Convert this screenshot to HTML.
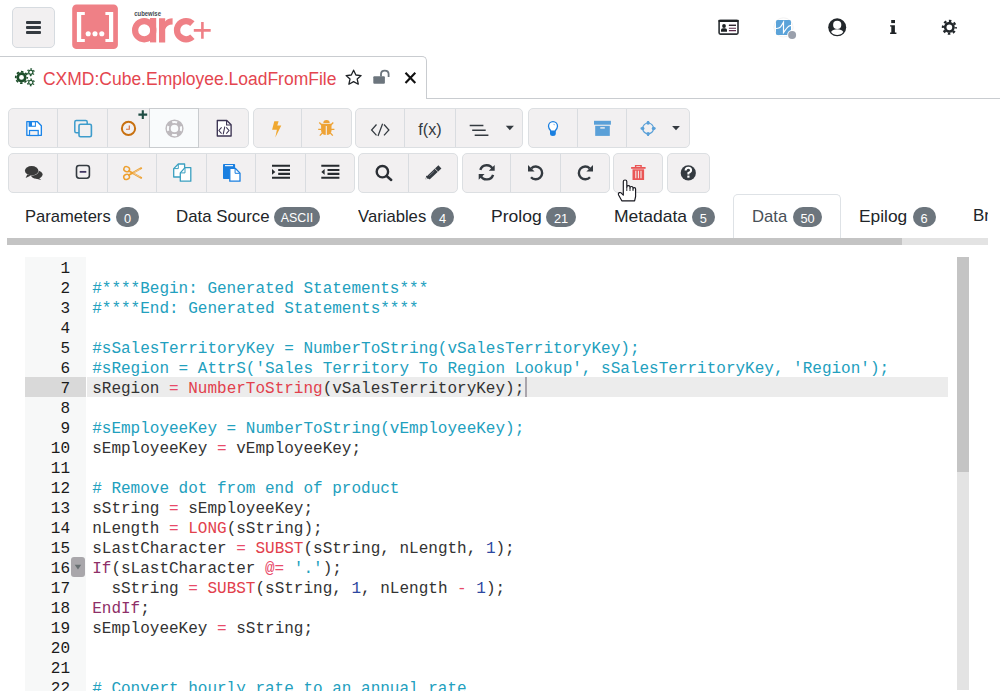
<!DOCTYPE html>
<html><head><meta charset="utf-8">
<style>
*{box-sizing:border-box;margin:0;padding:0}
html,body{width:1000px;height:691px;overflow:hidden;background:#fff;font-family:"Liberation Sans",sans-serif;position:relative}
.abs{position:absolute}
#ham{left:12px;top:7px;width:43px;height:41px;background:#f2f0f1;border:1px solid #d6dbe0;border-radius:5px}
#ham i{position:absolute;left:13px;width:15.2px;height:2.5px;background:#343a40;border-radius:1px}
#tab{left:-5px;top:56px;width:432px;height:43px;border:1px solid #c9ccd0;border-bottom:none;border-radius:0 5px 0 0;background:#fff}
#tabline{left:426px;top:98px;width:574px;height:1px;background:#c9ccd0}
#title{left:42.7px;top:68px;font-size:19.2px;transform:scaleX(0.911);transform-origin:0 0;color:#e4464f;white-space:nowrap;line-height:22px}
.grp{position:absolute;height:40px;background:#f2f0f1;border:1px solid #dcdfe2;border-radius:5px;overflow:hidden}
.sep{position:absolute;width:1px;background:#d9dce0}
.tl{position:absolute;top:206px;font-size:17px;transform-origin:0 0;color:#212529;white-space:nowrap;line-height:22px}
.bd{position:absolute;top:207px;height:20px;background:#6c757d;color:#fff;border-radius:10px;font-size:12.8px;text-align:center;line-height:23px;font-weight:normal}
#code{left:92.2px;top:259px;font-family:"Liberation Mono",monospace;font-size:16px;line-height:20px;color:#333;white-space:pre}
.ln{position:absolute;left:20px;width:50px;text-align:right;font-family:"Liberation Mono",monospace;font-size:16px;line-height:20px;color:#1a1a1a}
.c{color:#22a0be}
.o{color:#e84a6a}
.f{color:#e2404c}
.k{color:#8e2f68}
.n{color:#2c47a0}
.s{color:#22a0be}
svg{position:absolute;left:0;top:0}
</style></head><body>
<!-- header -->
<div id="ham" class="abs"><i style="top:13.15px"></i><i style="top:18.25px"></i><i style="top:23.45px"></i></div>

<div id="tab" class="abs"></div>
<div id="tabline" class="abs"></div>
<div id="title" class="abs">CXMD:Cube.Employee.LoadFromFile</div>

<!-- toolbar row1 -->
<div class="grp" style="left:8px;top:108px;width:240.5px"></div>
<div class="grp" style="left:252.5px;top:108px;width:99px"></div>
<div class="grp" style="left:354.5px;top:108px;width:168px"></div>
<div class="grp" style="left:528px;top:108px;width:161.5px"></div>
<div class="abs" style="left:149px;top:108px;width:50px;height:40px;background:#f9fbfc;border:1px solid #c9cccf"></div>
<div class="sep" style="left:57px;top:109px;height:38px"></div>
<div class="sep" style="left:107px;top:109px;height:38px"></div>
<div class="sep" style="left:301px;top:109px;height:38px"></div>
<div class="sep" style="left:404px;top:109px;height:38px"></div>
<div class="sep" style="left:455px;top:109px;height:38px"></div>
<div class="sep" style="left:577px;top:109px;height:38px"></div>
<div class="sep" style="left:626px;top:109px;height:38px"></div>
<!-- toolbar row2 -->
<div class="grp" style="left:8px;top:152.5px;width:347px"></div>
<div class="grp" style="left:358px;top:152.5px;width:99.5px"></div>
<div class="grp" style="left:461.5px;top:152.5px;width:148.5px"></div>
<div class="grp" style="left:613.2px;top:152.5px;width:50.3px"></div>
<div class="grp" style="left:666.5px;top:152.5px;width:43px"></div>
<div class="sep" style="left:57px;top:153.5px;height:38px"></div>
<div class="sep" style="left:107px;top:153.5px;height:38px"></div>
<div class="sep" style="left:156px;top:153.5px;height:38px"></div>
<div class="sep" style="left:206px;top:153.5px;height:38px"></div>
<div class="sep" style="left:255px;top:153.5px;height:38px"></div>
<div class="sep" style="left:305px;top:153.5px;height:38px"></div>
<div class="sep" style="left:408px;top:153.5px;height:38px"></div>
<div class="sep" style="left:510px;top:153.5px;height:38px"></div>
<div class="sep" style="left:560px;top:153.5px;height:38px"></div>

<!-- tabs -->
<div class="abs" style="left:733px;top:193.5px;width:108px;height:46px;border:1px solid #dee2e6;border-bottom:none;border-radius:5px 5px 0 0;background:#fff"></div>
<div class="tl" style="left:24.6px;transform:scaleX(0.975)">Parameters</div>
<div class="bd" style="left:116px;width:23px">0</div>
<div class="tl" style="left:175.5px;transform:scaleX(0.99)">Data Source</div>
<div class="bd" style="left:274px;width:46px;font-size:12.4px">ASCII</div>
<div class="tl" style="left:358px;transform:scaleX(0.98)">Variables</div>
<div class="bd" style="left:431px;width:23px">4</div>
<div class="tl" style="left:490.5px;transform:scaleX(1.03)">Prolog</div>
<div class="bd" style="left:546px;width:30px">21</div>
<div class="tl" style="left:613.5px;transform:scaleX(1.03)">Metadata</div>
<div class="bd" style="left:691.5px;width:23.5px">5</div>
<div class="tl" style="left:752px;color:#495057;transform:scaleX(0.98)">Data</div>
<div class="bd" style="left:793px;width:29px">50</div>
<div class="tl" style="left:859px;transform:scaleX(1.02)">Epilog</div>
<div class="bd" style="left:912.5px;width:23px">6</div>
<div class="abs" style="left:960px;top:195px;width:28px;height:40px;overflow:hidden"><div class="tl" style="left:13px;top:10px">Br</div></div>
<div class="abs" style="left:7px;top:238px;width:981px;height:6.5px;background:#e3e3e3"></div>
<div class="abs" style="left:7px;top:238px;width:895px;height:6.5px;background:#c4c4c4"></div>

<!-- editor -->
<div class="abs" style="left:25px;top:257px;width:61px;height:434px;background:#f7f8f8"></div>
<div class="abs" style="left:25px;top:377px;width:61px;height:20px;background:#d9d9d9"></div>
<div class="abs" style="left:87px;top:377px;width:861px;height:20px;background:#ececec"></div>
<div class="abs" style="left:957px;top:257px;width:12px;height:433px;background:#e3e3e3"></div>
<div class="abs" style="left:957px;top:257px;width:12px;height:215px;background:#c4c4c4"></div>
<div class="abs" style="left:71px;top:557px;width:13.5px;height:19.5px;background:#a9a7ab;border-radius:3px"></div>
<div class="abs" style="left:525.2px;top:377px;width:1.6px;height:19.6px;background:#aaa5ac"></div>
<div class="ln" style="top:259px">1</div>
<div class="ln" style="top:279px">2</div>
<div class="ln" style="top:299px">3</div>
<div class="ln" style="top:319px">4</div>
<div class="ln" style="top:339px">5</div>
<div class="ln" style="top:359px">6</div>
<div class="ln" style="top:379px">7</div>
<div class="ln" style="top:399px">8</div>
<div class="ln" style="top:419px">9</div>
<div class="ln" style="top:439px">10</div>
<div class="ln" style="top:459px">11</div>
<div class="ln" style="top:479px">12</div>
<div class="ln" style="top:499px">13</div>
<div class="ln" style="top:519px">14</div>
<div class="ln" style="top:539px">15</div>
<div class="ln" style="top:559px">16</div>
<div class="ln" style="top:579px">17</div>
<div class="ln" style="top:599px">18</div>
<div class="ln" style="top:619px">19</div>
<div class="ln" style="top:639px">20</div>
<div class="ln" style="top:659px">21</div>
<div class="ln" style="top:679px">22</div>
<div id="code" class="abs">
<span class="c">#****Begin: Generated Statements***</span>
<span class="c">#****End: Generated Statements****</span>

<span class="c">#sSalesTerritoryKey = NumberToString(vSalesTerritoryKey);</span>
<span class="c">#sRegion = AttrS('Sales Territory To Region Lookup', sSalesTerritoryKey, 'Region');</span>
sRegion <span class="o">=</span> <span class="f">NumberToString</span>(vSalesTerritoryKey);

<span class="c">#sEmployeeKey = NumberToString(vEmployeeKey);</span>
sEmployeeKey <span class="o">=</span> vEmployeeKey;

<span class="c"># Remove dot from end of product</span>
sString <span class="o">=</span> sEmployeeKey;
nLength <span class="o">=</span> <span class="f">LONG</span>(sString);
sLastCharacter <span class="o">=</span> <span class="f">SUBST</span>(sString, nLength, <span class="n">1</span>);
<span class="k">If</span>(sLastCharacter <span class="o">@=</span> <span class="s">'.'</span>);
  sString <span class="o">=</span> <span class="f">SUBST</span>(sString, <span class="n">1</span>, nLength <span class="o">-</span> <span class="n">1</span>);
<span class="k">EndIf</span>;
sEmployeeKey <span class="o">=</span> sString;


<span class="c"># Convert hourly rate to an annual rate</span></div>

<!-- ICONS -->
<svg width="1000" height="691" viewBox="0 0 1000 691">
<!-- ICONS_START -->
<!-- logo -->
<rect x="72.2" y="4.5" width="45.7" height="44.5" rx="4.3" fill="#ef8086"/>
<path d="M76.9 12.1H84.8V15H81.2V38.9H84.8V41.9H76.9Z M113.2 12.1H105.4V15H109V38.9H105.4V41.9H113.2Z" fill="#fff"/>
<circle cx="88.2" cy="33.8" r="2.55" fill="#fff"/><circle cx="95" cy="33.8" r="2.55" fill="#fff"/><circle cx="101.8" cy="33.8" r="2.55" fill="#fff"/>
<circle cx="144.2" cy="30.2" r="9.1" fill="none" stroke="#ef8086" stroke-width="6.2"/>
<rect x="150" y="18" width="6.2" height="24.4" fill="#ef8086"/>
<path d="M159 42.4V18.3H165.2V21.5Q167.5 18.2 172.6 18.2V24.4Q166.8 24.4 165.2 29.3V42.4Z" fill="#ef8086"/>

<path d="M192.4 23.6A9.1 9.1 0 1 0 192.4 36.8" fill="none" stroke="#ef8086" stroke-width="6.3"/>
<path d="M193.8 30.4H210.7M202.4 21.9V38.8" stroke="#ef8086" stroke-width="2.6"/>
<text x="134.2" y="15.7" font-family="Liberation Sans" font-size="6.6" font-weight="bold" fill="#454b52" textLength="26.8" lengthAdjust="spacingAndGlyphs">cubewise</text>

<!-- header right icons -->
<rect x="719.1" y="20.6" width="18.9" height="13.5" rx="1.3" fill="none" stroke="#2b2f33" stroke-width="1.6"/>
<rect x="718.3" y="19.8" width="20.5" height="2.2" rx="0.8" fill="#1e2224"/>
<circle cx="724" cy="26" r="1.9" fill="#1e2224"/>
<path d="M721 31.8V30Q721 28.2 723 28.2H725Q727 28.2 727 30V31.8Z" fill="#1e2224"/>
<path d="M728.9 25.3H736M728.9 28.3H736M728.9 30.6H736" stroke="#5a2a4a" stroke-width="1.1"/>
<path d="M728.9 25.3H736" stroke="#1e2224" stroke-width="1.1"/>
<circle cx="783.5" cy="27.4" r="9.6" fill="none" stroke="#eeeeee" stroke-width="0.8"/>
<rect x="776" y="20" width="15" height="14.9" rx="1.5" fill="#5ba3d9"/>
<path d="M776 28.5Q780 28.5 781.5 25.5L783.5 22.1V32.6L786.5 28.5Q788.5 25.6 791 25.3" fill="none" stroke="#fff" stroke-width="1.2"/>
<circle cx="792.1" cy="34.9" r="4.9" fill="#fff"/>
<circle cx="792.1" cy="34.9" r="4" fill="#9aa0ac"/>
<circle cx="837.2" cy="27.35" r="9" fill="#22272b"/>
<path d="M831.06 32Q832.6 29.3 837.2 29.3Q841.8 29.3 843.34 32A7.7 7.7 0 0 1 831.06 32Z" fill="#fff"/>
<circle cx="837.2" cy="24.9" r="4.1" fill="#fff"/>
<rect x="891.2" y="20" width="3.8" height="3.1" fill="#1f2326"/>
<path d="M890.1 25.2H894.9V32.4H896.4V34H890.1V32.4H891.3V26.6H890.1Z" fill="#1f2326"/>
<g transform="translate(949.35 27.3)">
<circle r="4.15" fill="none" stroke="#22272b" stroke-width="2.6"/>
<circle r="6.4" fill="none" stroke="#22272b" stroke-width="2.3" stroke-dasharray="2.5 2.527" stroke-dashoffset="1.25"/>
</g>

<!-- tab icons -->
<g transform="translate(21.5 77.4)">
<circle r="3.75" fill="none" stroke="#1d4d2a" stroke-width="2.6"/>
<circle r="5.75" fill="none" stroke="#1d4d2a" stroke-width="1.7" stroke-dasharray="2.5 2.016" stroke-dashoffset="1.25"/>
</g>
<g transform="translate(30.8 72.2)">
<circle r="2.1" fill="none" stroke="#1f5430" stroke-width="1.3"/>
<circle r="3.3" fill="none" stroke="#1f5430" stroke-width="1.3" stroke-dasharray="1.6 1.856" stroke-dashoffset="0.8" transform="rotate(30)"/>
</g>
<g transform="translate(30.8 82.4)">
<circle r="2.1" fill="none" stroke="#1f5430" stroke-width="1.3"/>
<circle r="3.3" fill="none" stroke="#1f5430" stroke-width="1.3" stroke-dasharray="1.6 1.856" stroke-dashoffset="0.8" transform="rotate(30)"/>
</g>
<path d="M353.6 70.2L355.9 75L361.1 75.6L357.2 79.1L358.3 84.2L353.6 81.6L348.9 84.2L350 79.1L346.1 75.6L351.3 75Z" fill="none" stroke="#1e2226" stroke-width="1.3" stroke-linejoin="round"/>
<rect x="373.3" y="76.2" width="11.6" height="7.5" rx="1" fill="#6c757d"/>
<path d="M381 76.5V74Q381 70.6 384.8 70.6Q388.6 70.6 388.6 74V77" fill="none" stroke="#6c757d" stroke-width="1.8"/>
<path d="M405.5 72.7L415.3 83M415.3 72.7L405.5 83" stroke="#111" stroke-width="2.1"/>

<!-- row1 icons -->
<path d="M26.85 121.55H37.2L41.35 125.7V135.35H26.85Z" fill="#fff" stroke="#1b84e8" stroke-width="1.35" stroke-linejoin="round"/>
<rect x="28.6" y="121.2" width="7.3" height="5.6" fill="#1b84e8"/>
<rect x="32" y="122.3" width="2.9" height="3.4" fill="#fff"/>
<rect x="29.5" y="130.5" width="8.7" height="5" fill="#f4f2f3" stroke="#1b84e8" stroke-width="1.25"/>
<rect x="74.8" y="120.4" width="12.4" height="12.4" rx="1.5" fill="none" stroke="#3d9ccc" stroke-width="1.5"/>
<rect x="79" y="124.2" width="12.4" height="12.6" rx="1.5" fill="#f2f0f1" stroke="#3d9ccc" stroke-width="1.6"/>
<circle cx="128.5" cy="128.4" r="6.6" fill="none" stroke="#c8700f" stroke-width="2"/>
<path d="M129.3 125.5V129.2H126" fill="none" stroke="#d8703a" stroke-width="1.15"/>
<path d="M138.4 114.6H147.2M142.8 110.3V118.9" stroke="#1f4d44" stroke-width="2.1"/>
<circle cx="174.5" cy="128.55" r="6.45" fill="none" stroke="#bdb9bd" stroke-width="5.3"/>
<circle cx="174.5" cy="128.55" r="6.6" fill="none" stroke="#f9fbfc" stroke-width="2.1" stroke-dasharray="5 5.367" stroke-dashoffset="2.5"/>
<path d="M217.3 120.5H226.8L231.1 124.8V136H217.3Z" fill="#fff" stroke="#3b3352" stroke-width="1.35" stroke-linejoin="round"/>
<path d="M226.6 120.8V125H231" fill="none" stroke="#3b3352" stroke-width="1.1"/>
<path d="M221.6 127.3L218.9 130.5L221.6 133.7M226.3 127.3L229 130.5L226.3 133.7M224.8 126.6L223.2 134.4" fill="none" stroke="#3b3352" stroke-width="1.05"/>
<path d="M274.3 121.2H278.6L277.3 125.6H281.3L275.3 137.6L276.9 129.8H272.1Z" fill="#f0a830"/>
<path d="M323.3 123.1A3.2 3 0 0 1 329.7 123.1Z" fill="#eea336"/>
<path d="M321.1 123.7H331.5V130.3Q331.5 135.1 326.3 135.1Q321.1 135.1 321.1 130.3Z" fill="#eea336"/>
<path d="M326.3 126V135.2" stroke="#f2f0f1" stroke-width="1.1"/>
<path d="M319.3 122.5L322 125.2M333.3 122.5L330.6 125.2M318.2 129.3H321.5M334.4 129.3H331M319.8 135.6L322.3 133M332.8 135.6L330.3 133" stroke="#eea336" stroke-width="1.3"/>
<path d="M376.5 124.5L371.6 130L376.5 135.4M384 124.5L388.9 130L384 135.4M382.6 123.8L378 136" fill="none" stroke="#343a40" stroke-width="1.25"/>
<text x="418.3" y="134.6" font-family="Liberation Sans" font-size="17" fill="#343a40" textLength="23.4" lengthAdjust="spacingAndGlyphs">f(x)</text>
<path d="M469.7 125.4H483.4M472.2 130.3H485.7M474.7 135.3H488.4" stroke="#343a40" stroke-width="1.5"/>
<path d="M505.8 125.7H513.9L509.85 130.3Z" fill="#343a40"/>
<path d="M550.9 131Q548.5 128.3 548.5 126.2A4.5 4.5 0 0 1 557.5 126.2Q557.5 128.3 555.1 131" fill="#fff" stroke="#1a7fe0" stroke-width="1.3"/>
<path d="M550 130.6H555.8V133.4Q555.8 135.9 552.9 135.9Q550 135.9 550 133.4Z" fill="#1a7fe0"/>
<path d="M553.4 124.3L555 124.9" fill="none" stroke="#6fb0f0" stroke-width="0.8"/>
<rect x="594" y="120.8" width="16.9" height="3.9" fill="#5aa0d8"/>
<rect x="595.2" y="125.8" width="14.6" height="10.1" fill="#5aa0d8"/>
<rect x="600.3" y="127.2" width="4.5" height="1.4" fill="#f2f0f1"/>
<circle cx="648.1" cy="128.4" r="5.4" fill="none" stroke="#5aa0d8" stroke-width="1.2"/><circle cx="648.1" cy="123" r="1.75" fill="#5aa0d8"/><circle cx="648.1" cy="133.8" r="1.75" fill="#5aa0d8"/><circle cx="642.7" cy="128.4" r="1.75" fill="#5aa0d8"/><circle cx="653.5" cy="128.4" r="1.75" fill="#5aa0d8"/>
<path d="M648.1 120.9V123M648.1 133.8V135.9M640.6 128.4H642.7M653.5 128.4H655.6" stroke="#5aa0d8" stroke-width="1.8"/>
<path d="M672.1 126H679.9L676 130.2Z" fill="#343a40"/>

<!-- row2 icons -->
<ellipse cx="36.6" cy="174.6" rx="6" ry="4.2" fill="#3a3a3a"/>
<path d="M38.5 177.6L41.2 180L35.5 178.6Z" fill="#3a3a3a"/>
<ellipse cx="31.65" cy="170.7" rx="7.1" ry="5.1" fill="#f2f0f1"/>
<ellipse cx="31.65" cy="170.7" rx="6.75" ry="4.7" fill="#3a3a3a"/>
<path d="M27.3 174.5L25.6 177.9L31 175.6Z" fill="#3a3a3a"/>
<rect x="76.5" y="165.5" width="12.9" height="12.7" rx="2.6" fill="none" stroke="#343a40" stroke-width="1.6"/>
<path d="M79.7 171.85H86.3" stroke="#3f3560" stroke-width="1.8"/>
<ellipse cx="126.7" cy="169.2" rx="2.9" ry="2.5" transform="rotate(20 126.7 169.2)" fill="none" stroke="#eda030" stroke-width="1.5"/>
<ellipse cx="126.6" cy="176.9" rx="2.9" ry="2.5" transform="rotate(-20 126.6 176.9)" fill="none" stroke="#eda030" stroke-width="1.5"/>
<path d="M129 171L141.2 177.8M129 175L141.2 168.2" stroke="#eda030" stroke-width="1.9" stroke-linecap="round"/><path d="M133.5 173.4L140.3 177.2M133.5 172.6L140.3 168.8" stroke="#f4e6d6" stroke-width="0.55"/>
<path d="M173.7 168.6L178.3 164H184.6V177H173.7Z" fill="#fff" stroke="#3a9fc0" stroke-width="1.3" stroke-linejoin="round"/>
<path d="M178.3 164.2V168.6H173.9" fill="none" stroke="#3a9fc0" stroke-width="1"/>
<path d="M180.3 172.9L185 167.6H190.8V181.2H180.3Z" fill="#fff" stroke="#3a9fc0" stroke-width="1.3" stroke-linejoin="round"/>
<path d="M185 167.8V172.9H180.5" fill="none" stroke="#3a9fc0" stroke-width="1"/>
<rect x="223" y="163.9" width="12.1" height="15.1" rx="0.8" fill="#1a7fe0"/>
<rect x="225" y="165.1" width="8" height="1.1" fill="#fff"/>
<path d="M229.8 168.3H235.2L240 173.1V181.2H229.8Z" fill="#fff" stroke="#1a7fe0" stroke-width="1.3" stroke-linejoin="round"/>
<path d="M235.1 168.5V173.3H239.8" fill="none" stroke="#1a7fe0" stroke-width="1"/>
<path d="M272 165.8H290M278.2 170H290M278.2 173.9H290M272 177.7H290" stroke="#262a2e" stroke-width="2.1"/>
<path d="M272 169L275.3 171.9L272 174.8Z" fill="#262a2e"/>
<path d="M321.3 165.8H339.4M327.5 170H339.4M327.5 173.9H339.4M321.3 177.7H339.4" stroke="#262a2e" stroke-width="2.1"/>
<path d="M324.6 169L321.3 171.9L324.6 174.8Z" fill="#262a2e"/>
<circle cx="382.4" cy="171.7" r="5.7" fill="none" stroke="#2b2f35" stroke-width="2.4"/>
<path d="M386.7 176L391.2 180" stroke="#2b2f35" stroke-width="2.5" stroke-linecap="round"/>
<path d="M428.1 178L439.9 166.9" stroke="#343a40" stroke-width="4.4"/><path d="M425.6 179.3L426.3 175.6L429.5 178.6Z" fill="#343a40"/><path d="M425.9 178.9L426.2 177.2L427.7 178.6Z" fill="#fff"/>
<path d="M434.8 168.6L437.9 171.6" stroke="#f2f0f1" stroke-width="0.8"/>
<path d="M429.3 175.7L434.3 171" stroke="#9a9aa8" stroke-width="0.6"/>
<path d="M492.8 169.2A6.7 6.7 0 0 0 480.3 169.8M480.6 175.4A6.7 6.7 0 0 0 493.1 174.8" fill="none" stroke="#343a40" stroke-width="2.4"/>
<path d="M494.7 164.9V170.8H488.8Z M478.7 179.8V173.9H484.6Z" fill="#343a40"/>
<path d="M531.3 168.3A6.4 6.4 0 1 1 531 177.2" fill="none" stroke="#343a40" stroke-width="2.4"/>
<path d="M528 165V171.6H534.6Z" fill="#343a40"/>
<path d="M589.7 168.3A6.4 6.4 0 1 0 590 177.2" fill="none" stroke="#343a40" stroke-width="2.4"/>
<path d="M593 165V171.6H586.4Z" fill="#343a40"/>
<path d="M631.1 167.9H645.6" stroke="#ea5656" stroke-width="1.8"/>
<path d="M635.6 167.2V165.6H641.1V167.2" fill="none" stroke="#ea5656" stroke-width="1.4"/>
<rect x="632.5" y="169.3" width="11.6" height="10.7" fill="#ea5656"/>
<path d="M635.8 170.8V178.3M638.4 170.8V178.3M641 170.8V178.3" stroke="#f6eeee" stroke-width="1.05"/>
<circle cx="688.3" cy="172.9" r="7.6" fill="#343a40"/>
<path d="M685.6 170.6Q685.6 167.8 688.4 167.8Q691.1 167.8 691.1 170.3Q691.1 172 688.4 173V174.4" fill="none" stroke="#fff" stroke-width="2"/>
<rect x="687.3" y="175.6" width="2.2" height="2.1" fill="#fff"/>
<!-- cursor -->
<path d="M621.8 200.8L618.6 195Q617.8 193.3 619.5 192.6Q620.7 192.3 621.8 193.6L623.3 195.2V181.6Q623.3 180 625.05 180Q626.8 180 626.8 181.6V187.3Q626.8 185.6 628.4 185.6Q630 185.6 630 187.3V188Q630 186.5 631.5 186.5Q633 186.5 633 188.2V189Q633 187.6 634.3 187.6Q635.6 187.6 635.6 189V196.5L634.6 200.8Z" fill="#fff" stroke="#16161e" stroke-width="1.15" stroke-linejoin="round"/>
<path d="M626.8 187.3V191M630 188V191M633 189V191" stroke="#16161e" stroke-width="0.9"/>
<!-- fold triangle -->
<path d="M74.7 564.8H81.2L77.95 569.5Z" fill="#676f71"/>
<!-- ICONS_END -->
</svg>
</body></html>
